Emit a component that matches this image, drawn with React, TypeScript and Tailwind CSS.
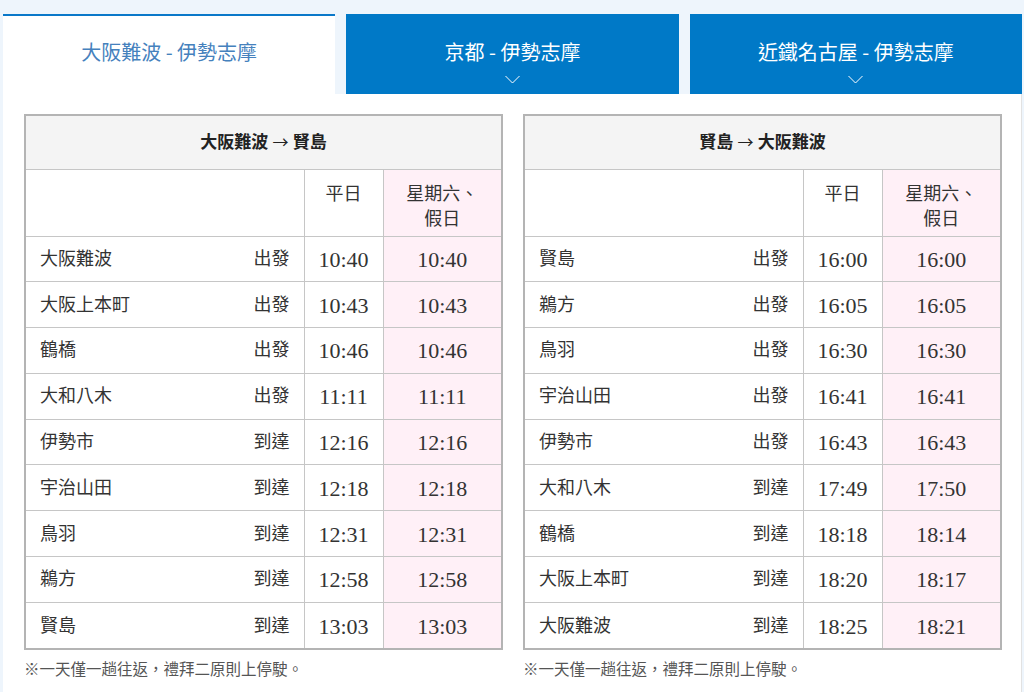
import React from 'react'

type Stop = { name: string; type: string; weekday: string; holiday: string }

const outbound: Stop[] = [
  { name: '大阪難波', type: '出發', weekday: '10:40', holiday: '10:40' },
  { name: '大阪上本町', type: '出發', weekday: '10:43', holiday: '10:43' },
  { name: '鶴橋', type: '出發', weekday: '10:46', holiday: '10:46' },
  { name: '大和八木', type: '出發', weekday: '11:11', holiday: '11:11' },
  { name: '伊勢市', type: '到達', weekday: '12:16', holiday: '12:16' },
  { name: '宇治山田', type: '到達', weekday: '12:18', holiday: '12:18' },
  { name: '鳥羽', type: '到達', weekday: '12:31', holiday: '12:31' },
  { name: '鵜方', type: '到達', weekday: '12:58', holiday: '12:58' },
  { name: '賢島', type: '到達', weekday: '13:03', holiday: '13:03' },
]

const inbound: Stop[] = [
  { name: '賢島', type: '出發', weekday: '16:00', holiday: '16:00' },
  { name: '鵜方', type: '出發', weekday: '16:05', holiday: '16:05' },
  { name: '鳥羽', type: '出發', weekday: '16:30', holiday: '16:30' },
  { name: '宇治山田', type: '出發', weekday: '16:41', holiday: '16:41' },
  { name: '伊勢市', type: '出發', weekday: '16:43', holiday: '16:43' },
  { name: '大和八木', type: '到達', weekday: '17:49', holiday: '17:50' },
  { name: '鶴橋', type: '到達', weekday: '18:18', holiday: '18:14' },
  { name: '大阪上本町', type: '到達', weekday: '18:20', holiday: '18:17' },
  { name: '大阪難波', type: '到達', weekday: '18:25', holiday: '18:21' },
]

const serif = "font-['Liberation_Serif','Noto_Sans_CJK_TC',serif]"

function Chevron() {
  return (
    <svg width="15" height="9" viewBox="0 0 15 9" fill="none" className="mx-auto mt-[10px]">
      <path d="M0.5 1 L7.5 8 L14.5 1" stroke="white" strokeWidth="1" />
    </svg>
  )
}

function Timetable({ from, to, stops }: { from: string; to: string; stops: Stop[] }) {
  return (
    <div>
      <div className="border-2 border-[#b4b4b4]">
        <table className={`w-full table-fixed border-collapse border-hidden text-[#333] ${serif}`}>
          <colgroup>
            <col className="w-[278px]" />
            <col className="w-[79px]" />
            <col />
          </colgroup>
          <thead>
            <tr>
              <th colSpan={3} className="h-[53px] bg-[#f4f4f4] border border-[#c6c6c6] text-[17px] font-bold text-[#222]">
                {from} <span className="font-['Noto_Sans_CJK_TC',sans-serif] font-normal text-[16px]">→</span> {to}
              </th>
            </tr>
            <tr>
              <th className="h-[67px] border border-[#c6c6c6]"></th>
              <th className="border border-[#c6c6c6] align-top pt-[12px] font-normal text-[18px] leading-[25px]">平日</th>
              <th className="border border-[#c6c6c6] align-top pt-[12px] font-normal text-[18px] leading-[25px] bg-[#fff0f7]">
                星期六、<br />假日
              </th>
            </tr>
          </thead>
          <tbody>
            {stops.map((s) => (
              <tr key={s.name} className="h-[45.8px]">
                <td className="border border-[#c6c6c6] px-[14px] text-[18px] pt-[1px]">
                  <div className="flex justify-between">
                    <span>{s.name}</span>
                    <span>{s.type}</span>
                  </div>
                </td>
                <td className="border border-[#c6c6c6] text-center text-[22px] pt-[1px]">{s.weekday}</td>
                <td className="border border-[#c6c6c6] text-center text-[22px] pt-[1px] bg-[#fff0f7]">{s.holiday}</td>
              </tr>
            ))}
          </tbody>
        </table>
      </div>
      <p className={`mt-[8px] text-[15.5px] text-[#555] ${serif}`}>※一天僅一趟往返，禮拜二原則上停駛。</p>
    </div>
  )
}

export default function App() {
  return (
    <div className="min-h-[692px] bg-[#eef5fc] pt-[14px] pl-[3px] pr-[2px] font-['Noto_Sans_CJK_TC',sans-serif]">
      <div className="grid grid-cols-3 gap-[11px]">
        <div className="h-[80px] bg-white border-t-2 border-[#0a78c9] flex items-start justify-center pt-[21px]">
          <span className="text-[20px] text-[#4581bd]">大阪難波 - 伊勢志摩</span>
        </div>
        <div className="h-[80px] bg-[#0079c7] text-white text-center pt-[25px]">
          <div className="text-[20px] leading-[26px]">京都 - 伊勢志摩</div>
          <Chevron />
        </div>
        <div className="h-[80px] bg-[#0079c7] text-white text-center pt-[25px]">
          <div className="text-[20px] leading-[26px]">近鐵名古屋 - 伊勢志摩</div>
          <Chevron />
        </div>
      </div>
      <div className="bg-white border-r border-[#e2e2e2] pl-[21px] pt-[20px] pb-[20px] grid grid-cols-[479px_479px] gap-[20px] w-[1019px]">
        <Timetable from="大阪難波" to="賢島" stops={outbound} />
        <Timetable from="賢島" to="大阪難波" stops={inbound} />
      </div>
    </div>
  )
}
